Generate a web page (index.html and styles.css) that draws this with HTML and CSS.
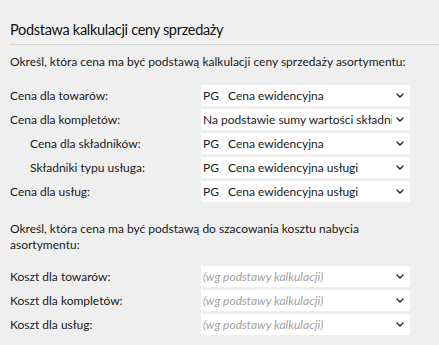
FILE: index.html
```html
<!DOCTYPE html>
<html lang="pl">
<head>
<meta charset="utf-8">
<link rel="stylesheet" href="styles.css">
</head>
<body>
<div class="panel">
  <h1 class="title">Podstawa kalkulacji ceny sprzedaży</h1>
  <p class="intro">Określ, która cena ma być podstawą kalkulacji ceny sprzedaży asortymentu:</p>
  <div class="grid">
    <div class="label">Cena dla towarów:</div>
    <div class="select"><span class="val"><span class="code">PG</span>Cena ewidencyjna</span><svg class="chev" viewBox="0 0 8 5"><path d="M0.7 0.7 L4 4 L7.3 0.7"/></svg></div>
    <div class="label">Cena dla kompletów:</div>
    <div class="select"><span class="val">Na podstawie sumy wartości składników</span><svg class="chev" viewBox="0 0 8 5"><path d="M0.7 0.7 L4 4 L7.3 0.7"/></svg></div>
    <div class="label sub">Cena dla składników:</div>
    <div class="select"><span class="val"><span class="code">PG</span>Cena ewidencyjna</span><svg class="chev" viewBox="0 0 8 5"><path d="M0.7 0.7 L4 4 L7.3 0.7"/></svg></div>
    <div class="label sub">Składniki typu usługa:</div>
    <div class="select"><span class="val"><span class="code">PG</span>Cena ewidencyjna usługi</span><svg class="chev" viewBox="0 0 8 5"><path d="M0.7 0.7 L4 4 L7.3 0.7"/></svg></div>
    <div class="label">Cena dla usług:</div>
    <div class="select"><span class="val"><span class="code">PG</span>Cena ewidencyjna usługi</span><svg class="chev" viewBox="0 0 8 5"><path d="M0.7 0.7 L4 4 L7.3 0.7"/></svg></div>
  </div>
  <p class="intro second">Określ, która cena ma być podstawą do szacowania kosztu nabycia asortymentu:</p>
  <div class="grid">
    <div class="label">Koszt dla towarów:</div>
    <div class="select"><span class="val ph">(wg podstawy kalkulacji)</span><svg class="chev" viewBox="0 0 8 5"><path d="M0.7 0.7 L4 4 L7.3 0.7"/></svg></div>
    <div class="label">Koszt dla kompletów:</div>
    <div class="select"><span class="val ph">(wg podstawy kalkulacji)</span><svg class="chev" viewBox="0 0 8 5"><path d="M0.7 0.7 L4 4 L7.3 0.7"/></svg></div>
    <div class="label">Koszt dla usług:</div>
    <div class="select"><span class="val ph">(wg podstawy kalkulacji)</span><svg class="chev" viewBox="0 0 8 5"><path d="M0.7 0.7 L4 4 L7.3 0.7"/></svg></div>
  </div>
</div>
</body>
</html>
```
FILE: styles.css
```css
html, body {
  margin: 0;
  padding: 0;
  background: #efefef;
}
body {
  font-family: Lato, "Open Sans", sans-serif;
  color: #1a1a1a;
  font-size: 12px;
}
.panel {
  padding: 20px 0 0 10px;
}
.title {
  margin: 0;
  font-weight: normal;
  font-size: 14.5px;
  letter-spacing: -0.3px;
  line-height: 20px;
  padding-bottom: 4px;
  border-bottom: 1px solid #d6d6d6;
  color: #111;
}
.intro {
  margin: 9px 0 0 0;
  line-height: 16px;
  white-space: nowrap;
}
.intro.second {
  white-space: normal;
  width: 380px;
  margin-top: 19px;
  margin-bottom: 13px;
}
.grid {
  display: grid;
  grid-template-columns: 191px 209px;
  grid-auto-rows: 21px;
  row-gap: 3px;
  margin-top: 15px;
  align-items: center;
}
.intro.second + .grid {
  margin-top: 0;
}
.label {
  height: 21px;
  box-sizing: border-box;
  line-height: 20px;
  padding-top: 1px;
}
.label.sub {
  padding-left: 20px;
}
.select {
  height: 21px;
  background: #fff;
  display: flex;
  align-items: center;
  padding: 0 6px 0 2px;
  box-sizing: border-box;
}
.val {
  flex: 1;
  white-space: nowrap;
  overflow: hidden;
  line-height: 21px;
}
.code {
  display: inline-block;
  width: 25px;
}
.ph {
  font-style: italic;
  color: #a3a3a3;
}
.chev {
  width: 8px;
  height: 5px;
  margin-left: 4px;
  flex: none;
}
.chev path {
  fill: none;
  stroke: #222;
  stroke-width: 1.4;
}
```
